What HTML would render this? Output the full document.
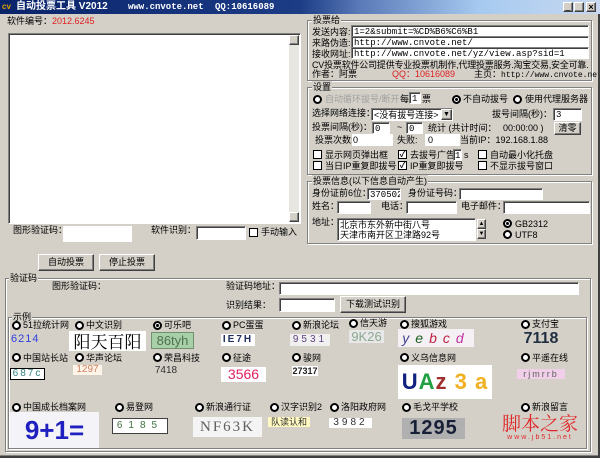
<!DOCTYPE html><html><head><meta charset="utf-8"><style>
*{margin:0;padding:0;box-sizing:border-box}
body{width:600px;height:458px;background:#d4d0c8;position:relative;overflow:hidden;font-family:"Liberation Sans","Noto Sans CJK SC",sans-serif;font-size:9px;color:#000}
.a{position:absolute;white-space:nowrap;line-height:12px}
.box{position:absolute;background:#fff;border:1px solid;border-color:#808080 #fff #fff #808080;box-shadow:inset 1px 1px 0 #404040;font-family:"Liberation Mono",monospace;font-size:9px;line-height:10px;padding:1px 2px;overflow:hidden;white-space:nowrap}
.wb{position:absolute;background:#fff}
.g{position:absolute;border:1px solid #808080;box-shadow:1px 1px 0 #fff,inset 1px 1px 0 #fff}
.gl{position:absolute;background:#d4d0c8;padding:0 1px;line-height:12px}
.btn{position:absolute;border:1px solid;border-color:#fff #404040 #404040 #fff;box-shadow:inset -1px -1px 0 #808080;text-align:center;line-height:15px}
.r{position:absolute;width:9px;height:9px;border-radius:50%;background:#fff;border:2px solid #000}
.r.on::after{content:"";position:absolute;left:1px;top:1px;width:3px;height:3px;border-radius:50%;background:#000}
.c{position:absolute;width:9px;height:9px;background:#fff;border:1.5px solid #000;font-size:8px;line-height:7px;text-align:center;font-weight:bold}
.cap{position:absolute;font-family:"Liberation Sans",sans-serif;white-space:nowrap;text-align:center;overflow:hidden}
</style></head><body>
<div style="position:absolute;left:0;top:0;width:600px;height:14px;background:linear-gradient(90deg,#0a246a 0,#1c3c86 50%,#5a7ab8 60%,#a6caf0 80%,#c8d8f0 100%)"></div>
<div class="a" style="left:2px;top:1px;color:#e0a000;font-size:8px;font-weight:bold">cv</div>
<div class="a" style="left:16px;top:1px;color:#fff;font-weight:bold;font-size:10px">自动投票工具 V2012</div>
<div class="a" style="left:128px;top:1px;color:#fff;font-family:'Liberation Mono',monospace;font-weight:bold;font-size:9px">www.cnvote.net</div>
<div class="a" style="left:215px;top:1px;color:#fff;font-family:'Liberation Mono',monospace;font-weight:bold;font-size:9px">QQ:10616089</div>
<div class="btn" style="left:563px;top:2px;width:10px;height:10px;background:#d4d0c8;font-size:8px;line-height:8px">_</div>
<div class="btn" style="left:574px;top:2px;width:10px;height:10px;background:#d4d0c8"></div>
<div class="btn" style="left:586px;top:2px;width:10px;height:10px;background:#d4d0c8;font-size:9px;line-height:8px;font-weight:bold">×</div>

<div class="a" style="left:7px;top:15px">软件编号：<span style="color:#e02020">2012.6245</span></div>
<div class="box" style="left:8px;top:33px;width:293px;height:191px"></div>
<div style="position:absolute;left:289px;top:35px;width:10px;height:187px;background:#e8e6e0"></div>
<div class="btn" style="left:289px;top:35px;width:10px;height:10px;background:#d4d0c8"></div>
<div class="btn" style="left:289px;top:212px;width:10px;height:10px;background:#d4d0c8"></div>

<div class="a" style="left:13px;top:224px">图形验证码：</div>
<div class="wb" style="left:63px;top:226px;width:69px;height:16px"></div>
<div class="a" style="left:151px;top:224px">软件识别：</div>
<div class="box" style="left:196px;top:226px;width:50px;height:14px"></div>
<div class="c" style="left:249px;top:228px"></div>
<div class="a" style="left:261px;top:226px">手动输入</div>
<div class="btn" style="left:38px;top:254px;width:56px;height:17px">自动投票</div>
<div class="btn" style="left:99px;top:254px;width:56px;height:17px">停止投票</div>

<div class="g" style="left:307px;top:20px;width:285px;height:61px"></div>
<div class="gl" style="left:312px;top:14px">投票给</div>
<div class="a" style="left:312px;top:26px">发送内容:</div>
<div class="a" style="left:312px;top:37px">来路伪造:</div>
<div class="a" style="left:312px;top:48px">接收网址:</div>
<div class="box" style="left:351px;top:25px;width:238px;height:12px">1=2&amp;submit=%CD%B6%C6%B1</div>
<div class="box" style="left:351px;top:36px;width:238px;height:12px">http://www.cnvote.net/</div>
<div class="box" style="left:351px;top:47px;width:238px;height:12px">http://www.cnvote.net/yz/view.asp?sid=1</div>
<div class="a" style="left:312px;top:59px;letter-spacing:-0.2px">CV投票软件公司提供专业投票机制作,代理投票服务.淘宝交易,安全可靠.</div>
<div class="a" style="left:312px;top:68px">作者：阿票</div>
<div class="a" style="left:392px;top:68px;color:#e02020">QQ：10616089</div>
<div class="a" style="left:474px;top:68px">主页：<span style="font-family:'Liberation Mono',monospace;font-size:8px">http://www.cnvote.net</span></div>

<div class="g" style="left:307px;top:87px;width:285px;height:88px"></div>
<div class="gl" style="left:312px;top:81px">设置</div>
<div class="r" style="left:313px;top:95px"></div>
<div class="a" style="left:325px;top:93px;color:#a0a0a0">自动循环拔号/断开</div>
<div class="a" style="left:400px;top:93px">每</div>
<div class="box" style="left:409px;top:92px;width:12px;height:12px">1</div>
<div class="a" style="left:422px;top:93px">票</div>
<div class="r on" style="left:452px;top:95px"></div>
<div class="a" style="left:463px;top:93px">不自动拔号</div>
<div class="r" style="left:513px;top:95px"></div>
<div class="a" style="left:525px;top:93px">使用代理服务器</div>
<div class="a" style="left:312px;top:107px">选择网络连接：</div>
<div class="box" style="left:371px;top:108px;width:82px;height:13px;font-family:'Liberation Sans','Noto Sans CJK SC',sans-serif">&lt;没有拔号连接&gt;</div>
<div class="btn" style="left:441px;top:109px;width:11px;height:11px;background:#d4d0c8;font-size:7px;line-height:9px">▼</div>
<div class="a" style="left:492px;top:108px">拔号间隔(秒)：</div>
<div class="box" style="left:553px;top:108px;width:29px;height:13px">3</div>
<div class="a" style="left:312px;top:121px">投票间隔(秒)：</div>
<div class="box" style="left:372px;top:122px;width:18px;height:12px">0</div>
<div class="a" style="left:397px;top:121px">~</div>
<div class="box" style="left:406px;top:122px;width:17px;height:12px">0</div>
<div class="a" style="left:428px;top:122px">统计 (共计时间：</div>
<div class="a" style="left:503px;top:122px">00:00:00 )</div>
<div class="btn" style="left:554px;top:122px;width:27px;height:13px;line-height:11px">清零</div>
<div class="a" style="left:315px;top:134px">投票次数:</div>
<div class="wb" style="left:352px;top:134px;width:41px;height:12px"></div>
<div class="a" style="left:353px;top:134px">0</div>
<div class="a" style="left:397px;top:134px">失败:</div>
<div class="wb" style="left:425px;top:134px;width:35px;height:12px"></div>
<div class="a" style="left:428px;top:134px">0</div>
<div class="a" style="left:460px;top:134px">当前IP：192.168.1.88</div>
<div class="c" style="left:313px;top:150px"></div><div class="a" style="left:325px;top:149px">显示网页弹出框</div>
<div class="c" style="left:398px;top:150px">✓</div><div class="a" style="left:410px;top:149px">去拔号广告</div>
<div class="box" style="left:453px;top:149px;width:9px;height:12px;padding:1px">1</div><div class="a" style="left:464px;top:149px">s</div>
<div class="c" style="left:478px;top:150px"></div><div class="a" style="left:490px;top:149px">自动最小化托盘</div>
<div class="c" style="left:313px;top:161px"></div><div class="a" style="left:325px;top:160px">当日IP重复即拔号</div>
<div class="c" style="left:398px;top:161px">✓</div><div class="a" style="left:410px;top:160px">IP重复即拔号</div>
<div class="c" style="left:478px;top:161px"></div><div class="a" style="left:490px;top:160px">不显示拔号窗口</div>

<div class="g" style="left:307px;top:181px;width:285px;height:63px"></div>
<div class="gl" style="left:312px;top:175px">投票信息(以下信息自动产生)</div>
<div class="a" style="left:312px;top:187px">身份证前6位：</div>
<div class="box" style="left:367px;top:188px;width:34px;height:12px">370502</div>
<div class="a" style="left:408px;top:187px">身份证号码：</div>
<div class="box" style="left:459px;top:188px;width:84px;height:12px"></div>
<div class="a" style="left:312px;top:200px">姓名：</div>
<div class="box" style="left:337px;top:201px;width:34px;height:13px"></div>
<div class="a" style="left:381px;top:200px">电话：</div>
<div class="box" style="left:406px;top:201px;width:51px;height:13px"></div>
<div class="a" style="left:461px;top:200px">电子邮件：</div>
<div class="box" style="left:503px;top:201px;width:87px;height:13px"></div>
<div class="a" style="left:312px;top:216px">地址：</div>
<div class="box" style="left:337px;top:218px;width:139px;height:23px;font-family:'Liberation Sans','Noto Sans CJK SC',sans-serif;line-height:10px">北京市东外新中街八号<br>天津市南开区卫津路92号</div>
<div class="btn" style="left:477px;top:219px;width:9px;height:10px;background:#d4d0c8;font-size:6px;line-height:8px">▲</div>
<div class="btn" style="left:477px;top:229px;width:9px;height:10px;background:#d4d0c8;font-size:6px;line-height:8px">▼</div>
<div class="r on" style="left:503px;top:219px"></div><div class="a" style="left:515px;top:218px">GB2312</div>
<div class="r" style="left:503px;top:230px"></div><div class="a" style="left:515px;top:229px">UTF8</div>

<div class="g" style="left:5px;top:278px;width:586px;height:174px"></div>
<div class="gl" style="left:9px;top:272px">验证码</div>
<div class="a" style="left:52px;top:280px">图形验证码：</div>
<div class="a" style="left:226px;top:280px">验证码地址：</div>
<div class="box" style="left:279px;top:282px;width:300px;height:13px"></div>
<div class="a" style="left:226px;top:299px">识别结果：</div>
<div class="box" style="left:279px;top:298px;width:56px;height:14px"></div>
<div class="btn" style="left:340px;top:296px;width:66px;height:17px">下载测试识别</div>

<div class="g" style="left:8px;top:317px;width:579px;height:132px"></div>
<div class="gl" style="left:12px;top:311px">示例</div>

<div class="r" style="left:12px;top:321px"></div><div class="a" style="left:23px;top:319px">51拉统计网</div>
<div class="r" style="left:75px;top:321px"></div><div class="a" style="left:86px;top:319px">中文识别</div>
<div class="r on" style="left:153px;top:321px"></div><div class="a" style="left:164px;top:319px">可乐吧</div>
<div class="r" style="left:222px;top:321px"></div><div class="a" style="left:233px;top:319px">PC蛋蛋</div>
<div class="r" style="left:292px;top:321px"></div><div class="a" style="left:303px;top:319px">新浪论坛</div>
<div class="r" style="left:349px;top:319px"></div><div class="a" style="left:360px;top:317px">信天游</div>
<div class="r" style="left:400px;top:320px"></div><div class="a" style="left:411px;top:318px">搜狐游戏</div>
<div class="r" style="left:521px;top:320px"></div><div class="a" style="left:532px;top:318px">支付宝</div>

<div class="cap" style="left:11px;top:333px;color:#3040e0;font-size:11px;letter-spacing:1px">6214</div>
<div class="cap" style="left:69px;top:331px;width:77px;height:20px;background:#fff;font-family:'Noto Serif CJK SC',serif;font-size:17px;line-height:20px">阳天百阳</div>
<div class="cap" style="left:151px;top:332px;width:43px;height:17px;background:#a8d0a8;border:1px solid #709070;color:#507050;font-size:13px;line-height:15px">86tyh</div>
<div class="cap" style="left:221px;top:334px;width:34px;height:12px;background:#fff;color:#203060;font-size:10px;line-height:12px;font-weight:bold;letter-spacing:2px">IE7H</div>
<div class="cap" style="left:290px;top:334px;width:40px;height:12px;background:#f0f0f0;color:#604080;font-size:10px;line-height:12px;letter-spacing:3px">9531</div>
<div class="cap" style="left:349px;top:330px;width:35px;height:13px;background:#e8e8e8;color:#8aa890;font-size:13px;line-height:13px">9K26</div>
<div class="cap" style="left:398px;top:329px;width:76px;height:18px;background:#f4f0f4;color:#c02040;font-size:14px;line-height:18px;font-style:italic;letter-spacing:6px"><span style="color:#404090">y</span><span style="color:#206020">e</span>bc<span style="color:#c030a0">d</span></div>
<div class="cap" style="left:520px;top:330px;width:42px;height:17px;color:#203040;font-size:16px;font-weight:bold;line-height:17px">7118</div>

<div class="r" style="left:12px;top:353px"></div><div class="a" style="left:23px;top:352px">中国站长站</div>
<div class="r" style="left:75px;top:353px"></div><div class="a" style="left:86px;top:352px">华声论坛</div>
<div class="r" style="left:153px;top:353px"></div><div class="a" style="left:164px;top:352px">荣昌科技</div>
<div class="r" style="left:222px;top:353px"></div><div class="a" style="left:233px;top:352px">征途</div>
<div class="r" style="left:292px;top:353px"></div><div class="a" style="left:303px;top:352px">骏网</div>
<div class="r" style="left:400px;top:353px"></div><div class="a" style="left:411px;top:352px">义乌信息网</div>
<div class="r" style="left:521px;top:353px"></div><div class="a" style="left:532px;top:352px">平遥在线</div>

<div class="cap" style="left:10px;top:368px;width:35px;height:12px;background:#fff;border:1px solid #000;color:#308080;font-size:10px;line-height:10px;letter-spacing:2px">687c</div>
<div class="cap" style="left:73px;top:365px;width:29px;height:10px;background:#fff4e8;color:#d08060;font-size:10px;line-height:10px">1297</div>
<div class="cap" style="left:152px;top:366px;width:28px;height:10px;color:#303030;font-size:10px;line-height:10px">7418</div>
<div class="cap" style="left:221px;top:367px;width:45px;height:15px;background:#fff;color:#e02060;font-size:14px;line-height:15px">3566</div>
<div class="cap" style="left:292px;top:366px;width:26px;height:10px;background:#fff;color:#202020;font-size:9px;line-height:10px;font-weight:bold">27317</div>
<div class="cap" style="left:398px;top:365px;width:94px;height:34px;background:#fff;font-size:22px;font-weight:bold;line-height:34px;letter-spacing:1px"><span style="color:#102080">U</span><span style="color:#20a040">A</span><span style="color:#a03030">z</span><span style="color:#f0b020"> 3 a</span></div>
<div class="cap" style="left:517px;top:369px;width:48px;height:10px;background:#f0d0e8;color:#606060;font-size:9px;line-height:10px;letter-spacing:2px">rjmrrb</div>

<div class="r" style="left:12px;top:403px"></div><div class="a" style="left:23px;top:401px">中国成长档案网</div>
<div class="r" style="left:115px;top:403px"></div><div class="a" style="left:126px;top:401px">易登网</div>
<div class="r" style="left:195px;top:403px"></div><div class="a" style="left:206px;top:401px">新浪通行证</div>
<div class="r" style="left:270px;top:403px"></div><div class="a" style="left:281px;top:401px">汉字识别2</div>
<div class="r" style="left:330px;top:403px"></div><div class="a" style="left:341px;top:401px">洛阳政府网</div>
<div class="r" style="left:402px;top:403px"></div><div class="a" style="left:413px;top:401px">毛戈平学校</div>
<div class="r" style="left:521px;top:403px"></div><div class="a" style="left:532px;top:401px">新浪留言</div>

<div class="cap" style="left:10px;top:412px;width:89px;height:36px;background:#f4f4f8;color:#2020c0;font-size:26px;font-weight:bold;line-height:36px">9+1=</div>
<div class="cap" style="left:112px;top:418px;width:56px;height:16px;background:#fff;border:1px solid #404040;color:#407040;font-size:10px;line-height:14px;letter-spacing:6px">6185</div>
<div class="cap" style="left:193px;top:417px;width:69px;height:20px;background:#f4f4f4;color:#606060;font-size:15px;line-height:20px;font-family:'Liberation Serif',serif;letter-spacing:2px">NF63K</div>
<div class="cap" style="left:268px;top:417px;width:42px;height:10px;background:#fff8c0;color:#303030;font-size:9px;line-height:10px">队读认和</div>
<div class="cap" style="left:329px;top:418px;width:43px;height:10px;background:#fff;color:#303030;font-size:10px;line-height:10px;letter-spacing:3px">3982</div>
<div class="cap" style="left:402px;top:418px;width:63px;height:21px;background:#b0b0b0;color:#182038;font-size:20px;font-weight:bold;line-height:21px;letter-spacing:1px">1295</div>
<div class="cap" style="left:500px;top:412px;width:80px;height:22px;color:#e02828;font-size:19px;line-height:22px;font-family:'Noto Serif CJK SC',serif">脚本之家</div>
<div class="cap" style="left:500px;top:434px;width:80px;height:8px;color:#e02828;font-size:7px;line-height:8px;letter-spacing:2px">www.jb51.net</div>

<div style="position:absolute;left:0;top:455px;width:600px;height:3px;background:#404040;border-top:1px solid #808080"></div>
<div style="position:absolute;right:0;top:14px;width:2px;height:444px;background:#404040"></div>
</body></html>
